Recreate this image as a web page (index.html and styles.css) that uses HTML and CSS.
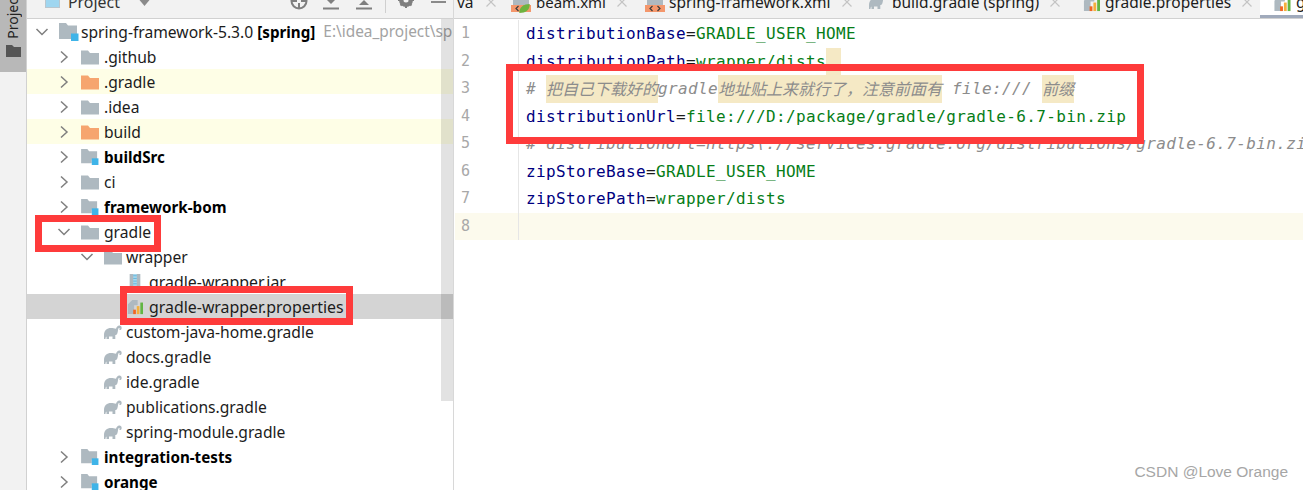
FILE: index.html
```html
<!DOCTYPE html>
<html lang="en">
<head>
<meta charset="utf-8">
<title>spring-framework</title>
<link rel="stylesheet" href="styles.css">
</head>
<body>
<svg class="defs" width="0" height="0" aria-hidden="true">
  <defs>
    <symbol id="folder" viewBox="0 0 18 16"><path d="M0 1.5h7l2 2.5h9v11.5H0z" fill="#aeb9c0"/></symbol>
    <symbol id="folder-o" viewBox="0 0 18 16"><path d="M0 1.5h7l2 2.5h9v11.5H0z" fill="#f6a56f"/></symbol>
    <symbol id="module" viewBox="0 0 20 18"><path d="M0 0h7l2 2.5h9V12h-6v4H0z" fill="#aeb9c0"/><rect x="12" y="10.500" width="7.500" height="7.500" fill="#3fb4e8"/></symbol>
    <symbol id="chev-r" viewBox="0 0 16 16"><path d="M5 2.500 11 8 5 13.500" fill="none" stroke="#7f7f7f" stroke-width="1.500"/></symbol>
    <symbol id="chev-d" viewBox="0 0 16 16"><path d="M2.500 5 8 10.500 13.500 5" fill="none" stroke="#7f7f7f" stroke-width="1.500"/></symbol>
    <symbol id="elephant" viewBox="0 0 18 16"><path d="M0 15V11C0 6.500 3 4 7 4c2 0 3.500.7 5 .7.600-2 2-3.500 3.700-3.200C17.500 1.900 18 3.500 17.500 5c-.4 1-1.300 1.200-2 .7-.3-.4-.2-1 .2-1.100-.3-.8-1.200-.6-1.500.4-.3 1.300-.3 3-.9 4.500-.4 1.300-1.300 1.500-2 1.500V15H8.500v-2.500H5V15H2.500v-2.500C1.700 13 1.500 14 1.500 15z" fill="#aeb9c0"/></symbol>
    <symbol id="props" viewBox="0 0 18 18"><path d="M1 17V6l5-5h6v6H8v10z" fill="#aeb9c0"/><rect x="7" y="12" width="3" height="5" fill="#f26522"/><rect x="11" y="8" width="3" height="9" fill="#f4af3d"/><rect x="15" y="4" width="3" height="13" fill="#62b543"/></symbol>
    <symbol id="jar" viewBox="0 0 14 18"><rect x="1" y="0" width="12" height="17" fill="#aeb9c0"/><rect x="5" y="0" width="4" height="17" fill="#a8d8ee"/><path d="M5 2h4M5 5h4M5 8h4M5 11h4M5 14h4" stroke="#5fb4dc" stroke-width="1"/></symbol>
    <symbol id="xml" viewBox="0 0 20 14"><path d="M2 0h16v7H2z" fill="#aeb9c0"/><rect x="0" y="7" width="20" height="7" fill="#f4976c"/><path d="M7.500 8 5 10.500 7.500 13M12.500 8 15 10.500 12.500 13" fill="none" stroke="#3c3c3c" stroke-width="1.200"/></symbol>
    <symbol id="leaf" viewBox="0 0 14 12"><path d="M0 12C0 4 6 0 14 0c0 8-5 12-14 12z" fill="#6db33f"/></symbol>
    <symbol id="close" viewBox="0 0 12 12"><path d="M1.500 1.500l9 9M10.500 1.500l-9 9" stroke="#c4c4c4" stroke-width="1.200"/></symbol>
  </defs>
</svg>

<div class="app">
  <aside class="strip">
    <div class="strip-tab">
      <span class="strip-label">Project</span>
      <svg class="strip-folder" viewBox="0 0 15 12"><path d="M0 0h6l2 2h7v10H0z" fill="#555"/></svg>
    </div>
  </aside>

  <section class="tree-panel">
    <header class="tree-head">
      <span class="head-title">
        <span class="proj-square"></span>
        <span class="proj-name">Project</span>
        <svg class="proj-caret" viewBox="0 0 10 6"><path d="M0 0h10L5 6z" fill="#8a8a8a"/></svg>
      </span>
      <span class="head-tools">
        <svg class="tool tool-target" viewBox="0 0 18 18"><circle cx="9" cy="9" r="7.500" fill="none" stroke="#7f7f7f" stroke-width="2"/><path d="M9 1v6M9 11v6M1 9h6M11 9h6" stroke="#7f7f7f" stroke-width="2"/></svg>
        <svg class="tool tool-exp" viewBox="0 0 16 18"><path d="M0 16.500h16" stroke="#7f7f7f" stroke-width="2"/><path d="M3 7h10l-5 5z" fill="#7f7f7f"/><path d="M0 4h16" stroke="#7f7f7f" stroke-width="2"/></svg>
        <svg class="tool tool-col" viewBox="0 0 16 18"><path d="M0 4h16" stroke="#7f7f7f" stroke-width="2"/><path d="M3 13h10L8 8z" fill="#7f7f7f"/><path d="M0 16.500h16" stroke="#7f7f7f" stroke-width="2"/></svg>
        <span class="tool-sep"></span>
        <svg class="tool tool-gear" viewBox="0 0 16 18"><circle cx="8" cy="8" r="5" fill="none" stroke="#7f7f7f" stroke-width="4"/><path d="M8 0v16M0 8h16M2.500 2.500l11 11M13.500 2.500l-11 11" stroke="#7f7f7f" stroke-width="2"/><circle cx="8" cy="8" r="2.500" fill="#f2f2f2"/></svg>
        <span class="tool-min"></span>
      </span>
    </header>

    <div class="tree">
      <div class="row d0"><svg class="chev"><use href="#chev-d"/></svg><svg class="ico root"><use href="#module"/></svg><span class="name">spring-framework-5.3.0 <b>[spring]</b></span><span class="path">E:\idea_project\spring-framework-5.3.0</span></div>
      <div class="row d1"><svg class="chev"><use href="#chev-r"/></svg><svg class="ico"><use href="#folder"/></svg><span class="name">.github</span></div>
      <div class="row d1 ignored"><svg class="chev"><use href="#chev-r"/></svg><svg class="ico"><use href="#folder-o"/></svg><span class="name">.gradle</span></div>
      <div class="row d1"><svg class="chev"><use href="#chev-r"/></svg><svg class="ico"><use href="#folder"/></svg><span class="name">.idea</span></div>
      <div class="row d1 ignored"><svg class="chev"><use href="#chev-r"/></svg><svg class="ico"><use href="#folder-o"/></svg><span class="name">build</span></div>
      <div class="row d1"><svg class="chev"><use href="#chev-r"/></svg><svg class="ico"><use href="#module"/></svg><span class="name strong">buildSrc</span></div>
      <div class="row d1"><svg class="chev"><use href="#chev-r"/></svg><svg class="ico"><use href="#folder"/></svg><span class="name">ci</span></div>
      <div class="row d1"><svg class="chev"><use href="#chev-r"/></svg><svg class="ico"><use href="#module"/></svg><span class="name strong">framework-bom</span></div>
      <div class="row d1"><svg class="chev"><use href="#chev-d"/></svg><svg class="ico"><use href="#folder"/></svg><span class="name">gradle</span></div>
      <div class="row d2"><svg class="chev"><use href="#chev-d"/></svg><svg class="ico"><use href="#folder"/></svg><span class="name">wrapper</span></div>
      <div class="row d3"><span class="chev"></span><svg class="ico"><use href="#jar"/></svg><span class="name">gradle-wrapper.jar</span></div>
      <div class="row d3 selected"><span class="chev"></span><svg class="ico"><use href="#props"/></svg><span class="name">gradle-wrapper.properties</span></div>
      <div class="row d2"><span class="chev"></span><svg class="ico"><use href="#elephant"/></svg><span class="name">custom-java-home.gradle</span></div>
      <div class="row d2"><span class="chev"></span><svg class="ico"><use href="#elephant"/></svg><span class="name">docs.gradle</span></div>
      <div class="row d2"><span class="chev"></span><svg class="ico"><use href="#elephant"/></svg><span class="name">ide.gradle</span></div>
      <div class="row d2"><span class="chev"></span><svg class="ico"><use href="#elephant"/></svg><span class="name">publications.gradle</span></div>
      <div class="row d2"><span class="chev"></span><svg class="ico"><use href="#elephant"/></svg><span class="name">spring-module.gradle</span></div>
      <div class="row d1"><svg class="chev"><use href="#chev-r"/></svg><svg class="ico"><use href="#module"/></svg><span class="name strong">integration-tests</span></div>
      <div class="row d1"><svg class="chev"><use href="#chev-r"/></svg><svg class="ico"><use href="#module"/></svg><span class="name strong">orange</span></div>
      <div class="tree-scroll"></div>
    </div>
  </section>

  <main class="editor">
    <nav class="tabs">
      <span class="tab t0"><span class="tab-text">va</span><svg class="x"><use href="#close"/></svg></span>
      <span class="tab t1"><span class="tab-ico-wrap"><svg class="tab-ico"><use href="#xml"/></svg><svg class="tab-leaf"><use href="#leaf"/></svg></span><span class="tab-text">beam.xml</span><svg class="x"><use href="#close"/></svg></span>
      <span class="tab t2"><svg class="tab-ico"><use href="#xml"/></svg><span class="tab-text">spring-framework.xml</span><svg class="x"><use href="#close"/></svg></span>
      <span class="tab t3"><svg class="tab-ico"><use href="#elephant"/></svg><span class="tab-text">build.gradle (spring)</span><svg class="x"><use href="#close"/></svg></span>
      <span class="tab t4"><svg class="tab-ico"><use href="#props"/></svg><span class="tab-text">gradle.properties</span><svg class="x"><use href="#close"/></svg></span>
      <span class="tab t5 active"><svg class="tab-ico"><use href="#props"/></svg><span class="tab-text">gradle-wrapper.properties</span></span>
    </nav>
    <div class="code">
      <div class="line"><span class="no">1</span><span class="txt"><span class="k">distributionBase</span><span class="e">=</span><span class="v">GRADLE_USER_HOME</span></span></div>
      <div class="line"><span class="no">2</span><span class="txt"><span class="k">distributionPath</span><span class="e">=</span><span class="v">wrapper/dists</span><span class="v mark dot">.</span></span></div>
      <div class="line"><span class="no">3</span><span class="txt"><span class="c"># </span><span class="c cjk mark">把自己下载好的</span><span class="c">gradle</span><span class="c cjk mark">地址贴上来就行了，注意前面有</span><span class="c"> file:/// </span><span class="c cjk mark">前缀</span></span></div>
      <div class="line"><span class="no">4</span><span class="txt"><span class="k">distributionUrl</span><span class="e">=</span><span class="v">file:///D:/package/gradle/gradle-6.7-bin.zip</span></span></div>
      <div class="line"><span class="no">5</span><span class="txt"><span class="c"># distributionUrl=https\://services.gradle.org/distributions/gradle-6.7-bin.zip</span></span></div>
      <div class="line"><span class="no">6</span><span class="txt"><span class="k">zipStoreBase</span><span class="e">=</span><span class="v">GRADLE_USER_HOME</span></span></div>
      <div class="line"><span class="no">7</span><span class="txt"><span class="k">zipStorePath</span><span class="e">=</span><span class="v">wrapper/dists</span></span></div>
      <div class="line current"><span class="no">8</span><span class="txt"></span></div>
    </div>
  </main>

  <div class="redbox box-code"></div>
  <div class="redbox box-gradle"></div>
  <div class="redbox box-props"></div>
  <div class="watermark">CSDN @Love Orange</div>
</div>
</body>
</html>
```
FILE: styles.css
```css
* { box-sizing: border-box; }
html, body { margin: 0; height: 100%; background: #fff; }
.defs { position: absolute; }

.app {
  position: relative;
  display: flex;
  width: 1303px;
  height: 490px;
  overflow: hidden;
  font-family: "Noto Sans", "Open Sans", sans-serif;
  color: #1c1c1c;
}

/* left tool strip */
.strip {
  flex: 0 0 27px;
  background: #f2f2f2;
  border-right: 1px solid #d1d1d1;
}
.strip-tab {
  height: 72px;
  background: #b8b8b8;
  display: flex;
  flex-direction: column;
  justify-content: flex-end;
  align-items: center;
  padding: 0 0 15px;
  overflow: hidden;
}
.strip-label {
  writing-mode: vertical-rl;
  transform: rotate(180deg);
  font-size: 14px;
  line-height: 26px;
  white-space: nowrap;
  color: #222;
  margin-bottom: 6px;
  flex: none;
}
.strip-folder { width: 15px; height: 12px; flex: none; }

/* project panel */
.tree-panel {
  flex: 0 0 427px;
  display: flex;
  flex-direction: column;
  border-right: 1px solid #d8d8d8;
  min-width: 0;
}
.tree-head {
  flex: 0 0 19px;
  background: #f2f2f2;
  border-bottom: 1px solid #d1d1d1;
  display: flex;
  justify-content: space-between;
  overflow: hidden;
}
.head-title { display: flex; align-items: flex-start; height: 18px; padding-left: 18px; }
.proj-square {
  width: 15px; height: 18px; margin-top: -10px;
  background: #9fd6f0; border: 1px solid #b9c6ce;
}
.proj-name { font-size: 15.900px; line-height: 20px; margin: -8px 0 0 8px; color: #333; }
.proj-caret { width: 11px; height: 6px; margin-left: 19px; }
.head-tools { display: flex; align-items: flex-start; padding-right: 7px; }
.tool { flex: none; margin-top: -8px; height: 18px; }
.tool-target { width: 18px; }
.tool-exp { width: 16px; margin-left: 15px; }
.tool-col { width: 16px; margin-left: 17px; }
.tool-sep { width: 1px; height: 13px; background: #cfcfcf; margin-left: 13px; }
.tool-gear { width: 16px; margin-left: 12px; }
.tool-min { width: 15px; height: 2px; background: #8a8a8a; margin: 1px 0 0 17px; }

.tree { position: relative; flex: 1; overflow: hidden; }
.row {
  display: flex;
  align-items: center;
  height: 25px;
  font-size: 15.650px;
  white-space: nowrap;
  overflow: hidden;
}
.d0 { padding-left: 7px; }
.d1 { padding-left: 29px; }
.d2 { padding-left: 52px; }
.d3 { padding-left: 74px; }
.d2 .ico { margin-right: 4px; }
.chev { flex: 0 0 16px; height: 16px; margin-right: 9px; }
.ico { flex: 0 0 18px; width: 18px; height: 16px; margin-right: 5px; }
.ico.root { flex-basis: 20px; width: 20px; height: 18px; margin-right: 2px; }
.ignored { background: #fefee6; }
.selected { background: #d4d4d4; }
.d3 .name { font-size: 15.900px; }
.strong { font-weight: 700; color: #000; font-size: 15.200px; }
.name b { font-weight: 700; color: #000; font-size: 15.200px; }
.path { color: #a3a3a3; margin-left: 8px; font-size: 15.400px; }
.tree-scroll {
  position: absolute;
  top: 0; right: 0;
  width: 12px; height: 382px;
  background: rgba(0, 0, 0, .115);
}

/* editor */
.editor { flex: 1; min-width: 0; display: flex; flex-direction: column; }
.tabs {
  flex: 0 0 19px;
  background: #f2f2f2;
  border-bottom: 1px solid #d1d1d1;
  display: flex;
  overflow: hidden;
}
.tab { display: flex; align-items: flex-start; flex: none; height: 18px; font-size: 15.500px; }
.tab-text { line-height: 20px; margin-top: -8px; white-space: nowrap; }
.x { width: 12px; height: 12px; margin: -4px 0 0 10px; flex: none; }
.tab-ico { width: 20px; height: 14px; margin-top: -2px; flex: none; }
.tab-ico-wrap { position: relative; width: 20px; height: 12px; flex: none; }
.tab-ico-wrap .tab-ico { display: block; }
.tab-leaf { position: absolute; right: 0; top: 4px; width: 13px; height: 9px; }
.t0 { width: 52px; padding-left: 3px; }
.t0 .x { margin-left: 11px; }
.t1 { width: 139px; padding-left: 5px; }
.t1 .tab-text { margin-left: 5px; font-size: 15px; }
.t2 { width: 224px; }
.t2 .tab-text { margin-left: 4px; }
.t3 { width: 214px; }
.t3 .tab-text { margin-left: 5px; }
.t3 .tab-ico { width: 18px; height: 16px; margin-top: -6px; }
.t4 { width: 177px; padding-left: 0; }
.t4 .tab-ico { width: 17px; height: 17px; margin-top: -5px; }
.t4 .tab-text { margin-left: 5px; }
.t5 { padding-left: 13px; background: #fff; box-shadow: inset 0 -3px 0 #a0aabb; flex: 1; }
.t5 .tab-ico { width: 18px; height: 17px; margin-top: -5px; }
.t5 .tab-text { margin-left: 5px; }
.t2, .t3, .t4 { padding-left: 0; }

.code {
  flex: 1;
  padding-top: 1px;
  overflow: hidden;
  position: relative;
}
.line { display: flex; height: 27.500px; align-items: stretch; white-space: nowrap; }
.no {
  flex: 0 0 65px;
  padding-left: 7px;
  border-right: 1px solid #e6e6e6;
  font: 15px/27.500px "DejaVu Sans Mono", monospace;
  color: #a8a8a8;
}
.txt {
  display: flex;
  margin-left: 7px;
  font: 16px/27.500px "DejaVu Sans Mono", monospace;
  letter-spacing: .37px;
}
.k { color: #000080; }
.e { color: #1c1c1c; }
.v { color: #067d17; }
.c { color: #8c8c8c; font-style: italic; white-space: pre; }
.cjk { font-family: "Noto Sans CJK SC", sans-serif; letter-spacing: 0; }
.mark { background: #f5e9c5; white-space: pre; }
.dot { padding-right: 5px; }
.current { background: #fcfaed; margin-left: 1px; }
.current .no { flex-basis: 64px; padding-left: 6px; }

/* annotation overlays */
.redbox { position: absolute; border: 7px solid #fe3b3b; pointer-events: none; }
.box-code { left: 506px; top: 64px; width: 638px; height: 80px; }
.box-gradle { left: 35px; top: 215px; width: 126px; height: 37px; }
.box-props { left: 120px; top: 286px; width: 233px; height: 39px; }
.watermark {
  position: absolute;
  right: 15px;
  top: 462px;
  font: 15.500px/20px "Liberation Sans", sans-serif;
  color: #a6a6a6;
}
```
